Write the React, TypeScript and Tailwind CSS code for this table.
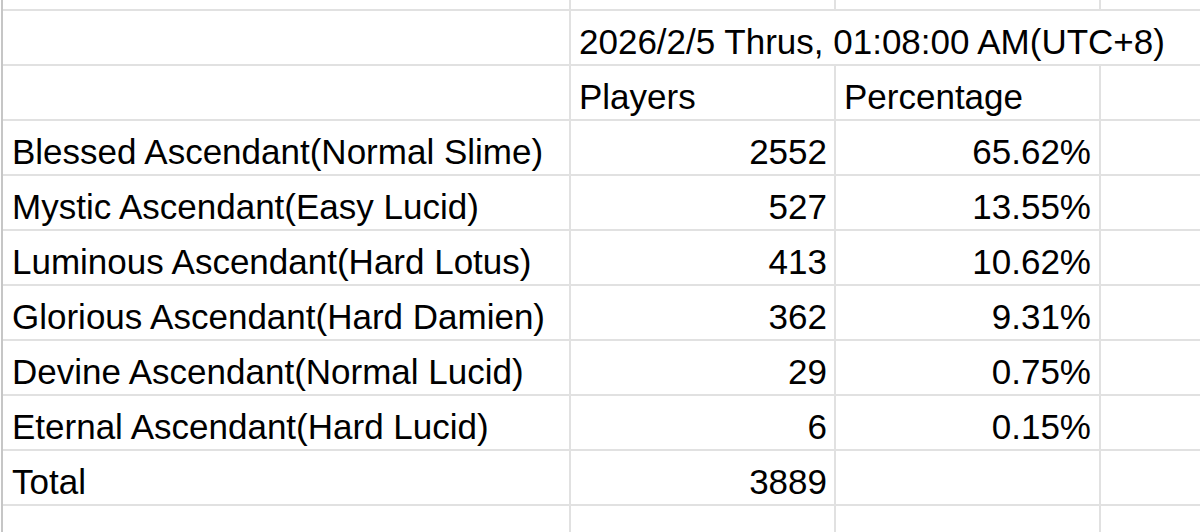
const rows = [
  { name: "Blessed Ascendant(Normal Slime)", players: "2552", pct: "65.62%" },
  { name: "Mystic Ascendant(Easy Lucid)", players: "527", pct: "13.55%" },
  { name: "Luminous Ascendant(Hard Lotus)", players: "413", pct: "10.62%" },
  { name: "Glorious Ascendant(Hard Damien)", players: "362", pct: "9.31%" },
  { name: "Devine Ascendant(Normal Lucid)", players: "29", pct: "0.75%" },
  { name: "Eternal Ascendant(Hard Lucid)", players: "6", pct: "0.15%" },
  { name: "Total", players: "3889", pct: "" },
];

const cell = "bg-white h-[53px] flex items-end pb-[4px] leading-[36px] whitespace-nowrap overflow-hidden";

export default function App() {
  return (
    <div className="w-[1200px] h-[532px] overflow-hidden bg-white pl-px">
      <div
        className="border-l-2 border-[#c6c6c6] bg-[#e1e1e1] grid grid-cols-[566px_263px_263px_1fr] gap-[2px] text-[35px] text-black"
        style={{ fontFamily: '"Liberation Sans", Arial, sans-serif' }}
      >
        {/* partial row above */}
        <div className="bg-white h-[9px]" />
        <div className="bg-white h-[9px]" />
        <div className="bg-white h-[9px]" />
        <div className="bg-white h-[9px]" />

        {/* date header */}
        <div className={cell} />
        <div className={`${cell} col-span-3 pl-[8px]`}>2026/2/5 Thrus, 01:08:00 AM(UTC+8)</div>

        {/* column headers */}
        <div className={cell} />
        <div className={`${cell} pl-[8px]`}>Players</div>
        <div className={`${cell} pl-[8px]`}>Percentage</div>
        <div className={cell} />

        {rows.map((r) => (
          <div key={r.name} className="contents">
            <div className={`${cell} pl-[9px]`}>{r.name}</div>
            <div className={`${cell} justify-end pr-[7px]`}>{r.players}</div>
            <div className={`${cell} justify-end pr-[8px]`}>{r.pct}</div>
            <div className={cell} />
          </div>
        ))}

        <div className={cell} />
        <div className={cell} />
        <div className={cell} />
        <div className={cell} />
      </div>
    </div>
  );
}
